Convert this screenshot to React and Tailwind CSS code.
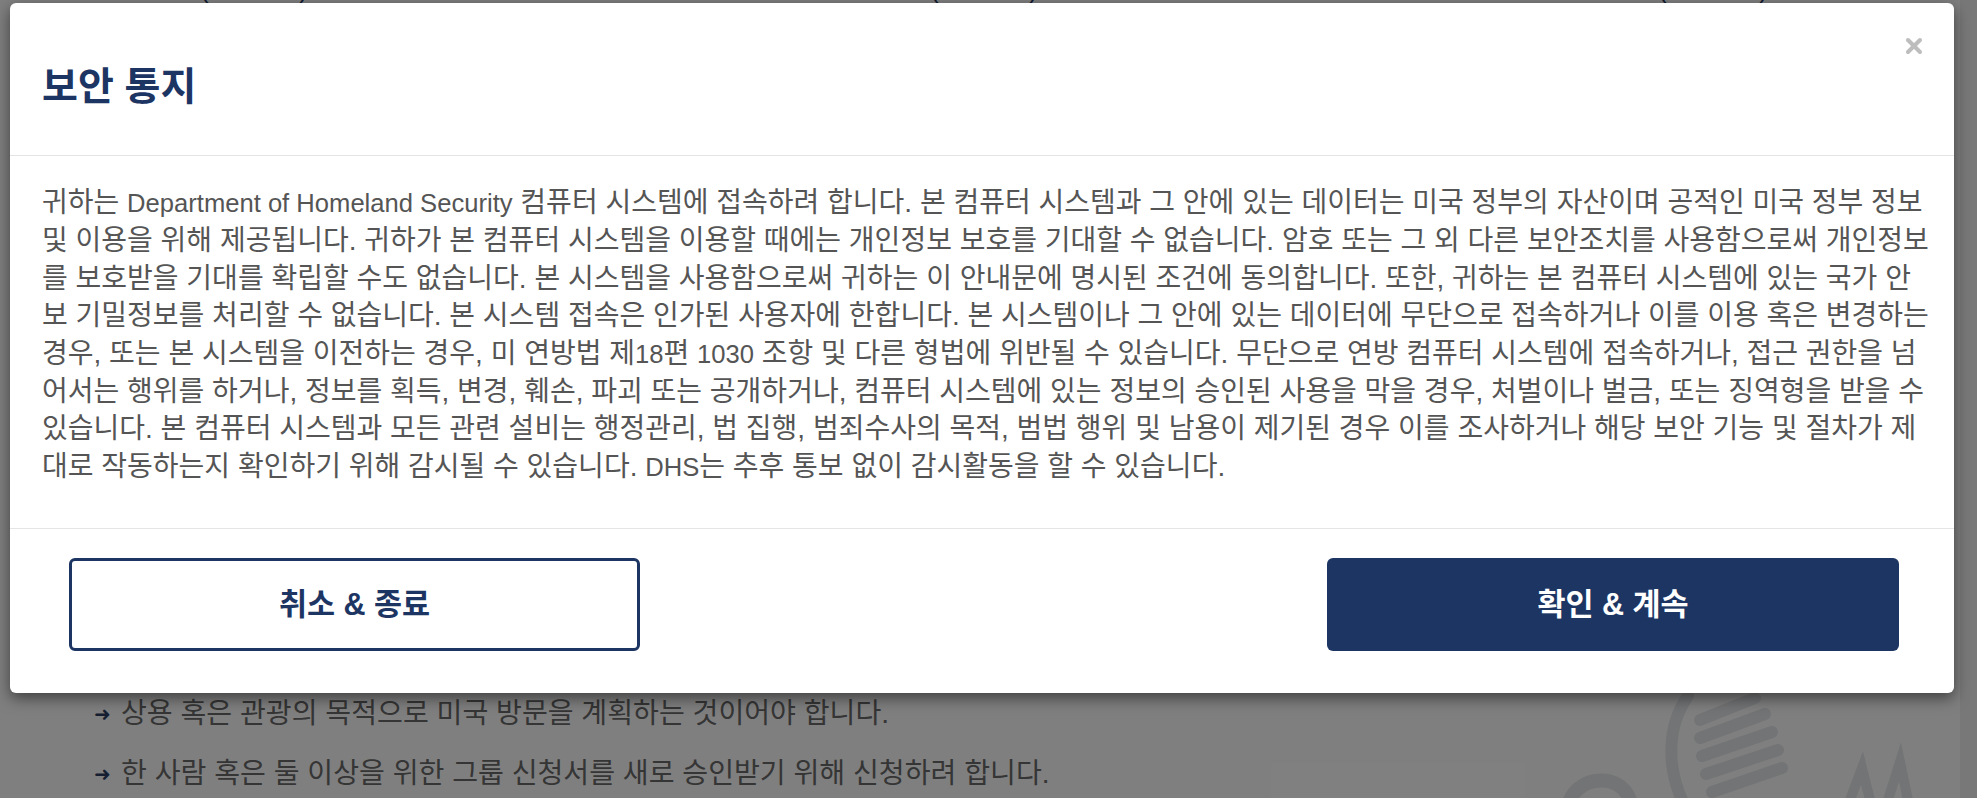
import { X } from 'lucide-react'

const noticeLines = [
  '귀하는 Department of Homeland Security 컴퓨터 시스템에 접속하려 합니다. 본 컴퓨터 시스템과 그 안에 있는 데이터는 미국 정부의 자산이며 공적인 미국 정부 정보',
  '및 이용을 위해 제공됩니다. 귀하가 본 컴퓨터 시스템을 이용할 때에는 개인정보 보호를 기대할 수 없습니다. 암호 또는 그 외 다른 보안조치를 사용함으로써 개인정보',
  '를 보호받을 기대를 확립할 수도 없습니다. 본 시스템을 사용함으로써 귀하는 이 안내문에 명시된 조건에 동의합니다. 또한, 귀하는 본 컴퓨터 시스템에 있는 국가 안',
  '보 기밀정보를 처리할 수 없습니다. 본 시스템 접속은 인가된 사용자에 한합니다. 본 시스템이나 그 안에 있는 데이터에 무단으로 접속하거나 이를 이용 혹은 변경하는',
  '경우, 또는 본 시스템을 이전하는 경우, 미 연방법 제18편 1030 조항 및 다른 형법에 위반될 수 있습니다. 무단으로 연방 컴퓨터 시스템에 접속하거나, 접근 권한을 넘',
  '어서는 행위를 하거나, 정보를 획득, 변경, 훼손, 파괴 또는 공개하거나, 컴퓨터 시스템에 있는 정보의 승인된 사용을 막을 경우, 처벌이나 벌금, 또는 징역형을 받을 수',
  '있습니다. 본 컴퓨터 시스템과 모든 관련 설비는 행정관리, 법 집행, 범죄수사의 목적, 범법 행위 및 남용이 제기된 경우 이를 조사하거나 해당 보안 기능 및 절차가 제',
  '대로 작동하는지 확인하기 위해 감시될 수 있습니다. DHS는 추후 통보 없이 감시활동을 할 수 있습니다.',
]

const requirements = [
  '상용 혹은 관광의 목적으로 미국 방문을 계획하는 것이어야 합니다.',
  '한 사람 혹은 둘 이상을 위한 그룹 신청서를 새로 승인받기 위해 신청하려 합니다.',
]

// Hangul runs a bit narrow in Noto, so latin runs get their own (smaller) size
function Mixed({ text }) {
  const parts = text.split(/([A-Za-z0-9]+(?: [A-Za-z0-9]+)*)/)
  return parts.map((part, i) =>
    i % 2 ? <span key={i} className="text-[25.6px]">{part}</span> : part
  )
}

// faint seal watermark peeking out under the dialog
function SealWatermark() {
  return (
    <svg width="400" height="110" viewBox="0 0 400 110" fill="none" stroke="#e6e8ea" strokeLinecap="round">
      <path d="M138 6 C118 34 116 74 132 110" strokeWidth="12" />
      <path d="M150 30 L205 8" strokeWidth="12" />
      <path d="M150 48 L215 24" strokeWidth="12" />
      <path d="M152 66 L222 42" strokeWidth="12" />
      <path d="M156 84 L228 60" strokeWidth="12" />
      <path d="M162 102 L232 78" strokeWidth="12" />
      <path d="M20 110 C30 86 70 82 80 110" strokeWidth="14" />
      <path d="M300 110 L312 78 L320 110" strokeWidth="10" />
      <path d="M338 110 L350 72 L358 110" strokeWidth="10" />
    </svg>
  )
}

export default function App() {
  return (
    <div className="relative h-[798px] w-full overflow-hidden bg-white font-['Liberation_Sans','Noto_Sans_CJK_KR',sans-serif]">

      {/* ── Page behind the dialog ── */}
      <div className="flex h-full">
        <div className="relative flex-1">
          <div className="-mt-[26px] flex h-[30px] text-[26px] leading-[30px] text-[#1d3563]">
            <span className="ml-[200px] flex w-[108px] justify-between"><span>(</span><span>)</span></span>
            <span className="ml-[622px] flex w-[108px] justify-between"><span>(</span><span>)</span></span>
            <span className="ml-[620px] flex w-[110px] justify-between"><span>(</span><span>)</span></span>
          </div>
          <ul className="mt-[680px] pl-[94px] text-[28.1px] leading-[60px] text-[#6a6a6a]">
            {requirements.map(item => (
              <li key={item} className="flex items-center gap-[10px]">
                <span className="text-[20px] text-[#2c3e63]">➜</span>
                <span>{item}</span>
              </li>
            ))}
          </ul>
          <div className="absolute left-[1550px] top-[690px]">
            <SealWatermark />
          </div>
        </div>
        <div className="w-[17px] bg-[#f1f1f1]" />
      </div>

      {/* ── Backdrop ── */}
      <div className="absolute inset-0 bg-black/50" />

      {/* ── Dialog ── */}
      <div className="absolute left-[10px] top-[3px] w-[1944px] rounded-[6px] bg-white shadow-[0_5px_15px_rgba(0,0,0,0.5)]">
        <div className="relative h-[153px] border-b border-[#e5e5e5] px-[32px] pt-[64px]">
          <h2 className="text-[39px] font-bold leading-[39px] text-[#1d3563]">보안 통지</h2>
          <button className="absolute right-[28px] top-[31px] text-[#bdbdbd]" aria-label="close">
            <X size={24} strokeWidth={4} />
          </button>
        </div>

        <div className="px-[32px] pb-[42px] pt-[28px] text-[28px] leading-[37.4px] text-[#555]">
          {noticeLines.map((line, i) => (
            <div key={i} className="whitespace-nowrap"><Mixed text={line} /></div>
          ))}
        </div>

        <div className="flex justify-between border-t border-[#e5e5e5] pb-[42px] pl-[59px] pr-[55px] pt-[29px]">
          <button className="flex h-[93px] w-[571px] items-center justify-center rounded-[6px] border-[3px] border-[#1d3563] bg-white text-[30.5px] font-bold text-[#1d3563]">
            취소 &amp; 종료
          </button>
          <button className="flex h-[93px] w-[572px] items-center justify-center rounded-[6px] bg-[#1d3563] text-[30.5px] font-bold text-white">
            확인 &amp; 계속
          </button>
        </div>
      </div>
    </div>
  )
}
